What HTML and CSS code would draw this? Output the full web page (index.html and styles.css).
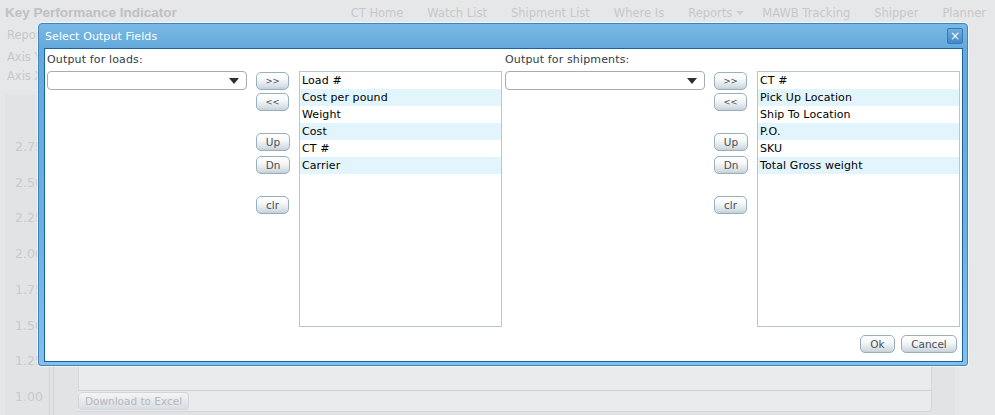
FILE: index.html
```
<!DOCTYPE html>
<html>
<head>
<meta charset="utf-8">
<title>Select Output Fields</title>
<link rel="stylesheet" href="styles.css">
</head>
<body>
<div class="page">
  <header class="topbar">
    <div class="brand">Key Performance Indicator</div>
    <nav class="nav">
      <span>CT Home</span>
      <span>Watch List</span>
      <span>Shipment List</span>
      <span>Where Is</span>
      <span class="dd">Reports<i class="caret"></i></span>
      <span>MAWB Tracking</span>
      <span>Shipper</span>
      <span>Planner</span>
    </nav>
  </header>
  <div class="filters">
    <div class="frow r1">Report Type</div>
    <div class="frow r2">Axis Y</div>
    <div class="frow r3">Axis X</div>
  </div>
  <div class="chart">
    <div class="yaxis">
      <span>2.75</span><span>2.50</span><span>2.25</span><span>2.00</span>
      <span>1.75</span><span>1.50</span><span>1.25</span><span class="last">1.00</span>
    </div>
    <div class="axislines"></div>
    <div class="plot">
      <div class="plot-body"></div>
      <div class="plot-foot"><button class="bg-btn">Download to Excel</button></div>
    </div>
  </div>

  <div class="dialog">
    <div class="titlebar">
      <span class="title">Select Output Fields</span>
      <span class="close">&#215;</span>
    </div>
    <div class="dbody">
      <div class="cols">
        <section class="col">
          <div class="label">Output for loads:</div>
          <div class="row">
            <div class="combo"><i class="arrow"></i></div>
            <div class="btns">
              <button class="btn tiny b-add">&gt;&gt;</button>
              <button class="btn tiny b-rem">&lt;&lt;</button>
              <button class="btn b-up">Up</button>
              <button class="btn b-dn">Dn</button>
              <button class="btn b-clr">clr</button>
            </div>
            <ul class="list">
              <li>Load #</li>
              <li>Cost per pound</li>
              <li>Weight</li>
              <li>Cost</li>
              <li>CT #</li>
              <li>Carrier</li>
            </ul>
          </div>
        </section>
        <section class="col">
          <div class="label">Output for shipments:</div>
          <div class="row">
            <div class="combo"><i class="arrow"></i></div>
            <div class="btns">
              <button class="btn tiny b-add">&gt;&gt;</button>
              <button class="btn tiny b-rem">&lt;&lt;</button>
              <button class="btn b-up">Up</button>
              <button class="btn b-dn">Dn</button>
              <button class="btn b-clr">clr</button>
            </div>
            <ul class="list">
              <li>CT #</li>
              <li>Pick Up Location</li>
              <li>Ship To Location</li>
              <li>P.O.</li>
              <li>SKU</li>
              <li>Total Gross weight</li>
            </ul>
          </div>
        </section>
      </div>
      <div class="footer">
        <button class="btn b-ok">Ok</button>
        <button class="btn b-cancel">Cancel</button>
      </div>
    </div>
  </div>
</div>
</body>
</html>
```

FILE: styles.css
```
* { box-sizing: border-box; }

body {
  margin: 0;
  background: #e6e7e9;
  font-family: "DejaVu Sans", Verdana, sans-serif;
}

.page {
  position: relative;
  width: 995px;
  height: 415px;
  overflow: hidden;
  color: #c4c5c7;
}

/* ---------- background page ---------- */
.topbar {
  display: flex;
  justify-content: space-between;
  align-items: center;
  height: 25px;
  padding: 0 9px 0 5px;
}

.brand {
  font-family: "Liberation Sans", Arial, sans-serif;
  font-weight: bold;
  font-size: 13.5px;
  color: #bfc0c2;
}

.nav {
  display: flex;
  align-items: center;
  gap: 24px;
  font-size: 11.5px;
  color: #c6c7c9;
}

.dd {
  display: flex;
  align-items: center;
  margin-right: -6px;
}

.caret {
  display: inline-block;
  width: 0;
  height: 0;
  margin-left: 4px;
  border-left: 4px solid transparent;
  border-right: 4px solid transparent;
  border-top: 4px solid #c5d2dc;
}

.filters {
  padding-left: 7px;
  white-space: nowrap;
  font-size: 11.5px;
  color: #c6c7c9;
}

.frow { height: 18px; line-height: 18px; }
.r1 { margin-top: 1px; }
.r2 { margin-top: 4px; }
.r3 { margin-top: 1px; }

.chart {
  display: flex;
  width: 950px;
  height: 330px;
  margin: 10px 0 0 5px;
  background: #e2e3e5;
}

.yaxis {
  display: flex;
  flex-direction: column;
  width: 44px;
  padding: 34px 0 0 10px;
  font-size: 12.5px;
  color: #c9cacc;
}

.yaxis span {
  height: 35.72px;
  line-height: 35.72px;
}

.axislines {
  width: 5px;
  border-left: 1px solid #d3d4d6;
  border-right: 1px solid #d3d4d6;
}

.plot {
  display: flex;
  flex-direction: column;
  width: 854px;
  margin-left: 24px;
}

.plot-body {
  height: 296px;
  background: #eaebed;
  border-left: 1px solid #d6d7d9;
  border-right: 1px solid #d6d7d9;
  border-bottom: 1px solid #cfd0d2;
}

.plot-foot {
  height: 21px;
  padding-top: 1px;
  background: #eaebed;
  border-bottom: 1px solid #d4d5d7;
  border-right: 1px solid #d6d7d9;
  border-radius: 0 0 4px 0;
}

.bg-btn {
  display: block;
  width: 111px;
  height: 18px;
  padding: 0;
  border: 1px solid #d0d6dc;
  border-radius: 4px;
  background: linear-gradient(#f3f4f5, #e6e9ec 50%, #d9dee2);
  font-family: "DejaVu Sans", Verdana, sans-serif;
  font-size: 10.5px;
  color: #b6b8ba;
}

/* ---------- dialog ---------- */
.dialog {
  position: absolute;
  left: 38px;
  top: 23px;
  width: 930px;
  height: 343px;
  padding: 0 4px 3px 5px;
  border: 1px solid #3d86c4;
  border-radius: 4px 4px 3px 3px;
  background: linear-gradient(#79b8e3, #65aadb 24px, #6cb0de 60%, #84c0e8);
  box-shadow: 0 0 0 1px rgba(255,255,255,0.6);
}

.titlebar {
  display: flex;
  align-items: center;
  justify-content: space-between;
  height: 24px;
  padding-left: 1px;
}

.title {
  font-size: 11px;
  color: #ffffff;
  letter-spacing: 0.1px;
}

.close {
  display: flex;
  align-items: center;
  justify-content: center;
  width: 16px;
  height: 16px;
  border: 1px solid #3a79b4;
  border-radius: 2px;
  background: linear-gradient(#6dafe0, #4189c8);
  color: #ffffff;
  font-size: 12px;
  line-height: 1;
}

.dbody {
  height: 314px;
  padding: 4px 2px 0 2px;
  background: #ffffff;
  border: 1px solid #1a62a6;
}

.cols {
  display: flex;
  gap: 3px;
}

.col {
  width: 455px;
}

.label {
  height: 14px;
  line-height: 14px;
  margin-bottom: 4px;
  font-size: 11px;
  color: #333c44;
  letter-spacing: 0.15px;
}

.row {
  display: flex;
  align-items: flex-start;
}

.combo {
  position: relative;
  width: 200px;
  height: 19px;
  border: 1px solid #a9abad;
  border-radius: 4px;
  background: #ffffff;
}

.arrow {
  position: absolute;
  right: 7px;
  top: 6px;
  width: 0;
  height: 0;
  border-left: 5px solid transparent;
  border-right: 5px solid transparent;
  border-top: 6px solid #2f2f2f;
}

.btns {
  display: flex;
  flex-direction: column;
  align-items: flex-start;
  width: 52px;
  padding-left: 9px;
}

.btn {
  display: block;
  height: 18px;
  padding: 0;
  border: 1px solid #98afbe;
  border-radius: 5px;
  background: linear-gradient(#ffffff, #f6f8f9 40%, #d5dee4 85%, #c3cfd7);
  font-family: "DejaVu Sans", Verdana, sans-serif;
  font-size: 10.5px;
  color: #4b4f53;
  line-height: 16px;
}

.tiny { font-size: 8.5px; width: 33px; }
.b-add { margin-top: 1px; }
.b-rem { margin-top: 3px; }
.b-up  { margin-top: 22px; width: 34px; }
.b-dn  { margin-top: 5px; width: 34px; }
.b-clr { margin-top: 22px; width: 33px; }

.list {
  width: 203px;
  height: 256px;
  margin: 0;
  padding: 0;
  list-style: none;
  border: 1px solid #b7c6cf;
  background: #ffffff;
}

.list li {
  height: 17px;
  line-height: 17px;
  padding-left: 2px;
  font-size: 11px;
  color: #000000;
  letter-spacing: 0.1px;
  white-space: nowrap;
}

.list li:nth-child(even) { background: #e3f5fc; }

.footer {
  display: flex;
  justify-content: flex-end;
  gap: 6px;
  margin: 8px 3px 0 0;
}

.b-ok { width: 35px; }
.b-cancel { width: 56px; }
```
